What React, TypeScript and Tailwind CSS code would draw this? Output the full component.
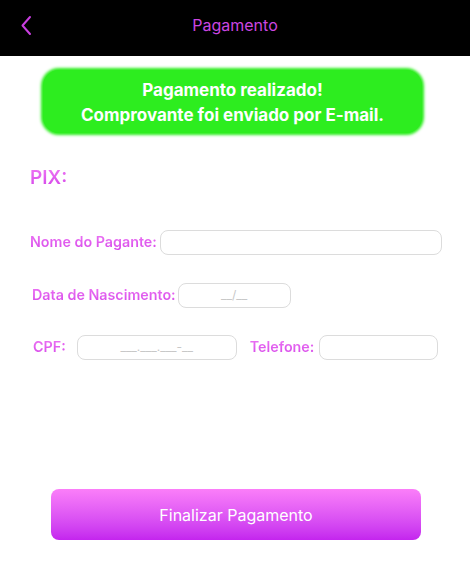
import React from "react";

const labelCls =
  "bg-gradient-to-b from-[#f07af5] to-[#d23ee8] bg-clip-text text-transparent font-semibold text-[14.3px] whitespace-nowrap";
const inputCls =
  "h-[25px] rounded-[8px] border border-[#dcdcdc] bg-white text-center text-[12px] text-[#c8c8c8] flex items-center justify-center";

export default function App() {
  return (
    <div className="w-[470px] h-[564px] bg-white flex flex-col font-['Inter','Noto_Sans',sans-serif]">
      <div className="h-[56px] bg-black relative flex items-center justify-center shrink-0 pb-[6px]">
        <svg className="absolute left-[20px] top-[15px]" width="12" height="21" viewBox="0 0 12 21" fill="none">
          <path d="M10 2 L2.5 10.5 L10 19" stroke="#c93ee0" strokeWidth="2" strokeLinecap="round" strokeLinejoin="round" />
        </svg>
        <span className="text-[16px] text-[#cc46e0] font-normal">Pagamento</span>
      </div>

      <div className="mt-[14px] mx-[43px] w-[379px] h-[63px] pt-[3px] rounded-[16px] bg-[#2ded1f] shadow-[0_0_3px_2px_#2ded1f] flex flex-col items-center justify-center text-white font-bold text-[17px] leading-[25px]">
        <span>Pagamento realizado!</span>
        <span>Comprovante foi enviado por E-mail.</span>
      </div>

      <div className="mt-[31px] ml-[30px]">
        <span className="bg-gradient-to-b from-[#f07af5] to-[#d23ee8] bg-clip-text text-transparent font-semibold text-[19px]">PIX:</span>
      </div>

      <div className="mt-[37px] ml-[30px] flex items-center gap-[3px]">
        <span className={labelCls}>Nome do Pagante:</span>
        <div className={inputCls + " w-[282px]"}></div>
      </div>

      <div className="mt-[28px] ml-[32px] flex items-center gap-[2px]">
        <span className={labelCls}>Data de Nascimento:</span>
        <div className={inputCls + " w-[113px]"}>__/__</div>
      </div>

      <div className="mt-[27px] ml-[33px] flex items-center">
        <span className={labelCls}>CPF:</span>
        <div className={inputCls + " w-[160px] ml-[11px]"}>___.___.___-__</div>
        <span className={labelCls + " ml-[13px]"}>Telefone:</span>
        <div className={inputCls + " w-[119px] ml-[5px]"}></div>
      </div>

      <div className="mt-auto mb-[24px] ml-[51px] w-[370px] h-[51px] rounded-[8px] bg-gradient-to-b from-[#fb7ef9] to-[#c424ee] flex items-center justify-center text-white text-[16px]">
        Finalizar Pagamento
      </div>
    </div>
  );
}
